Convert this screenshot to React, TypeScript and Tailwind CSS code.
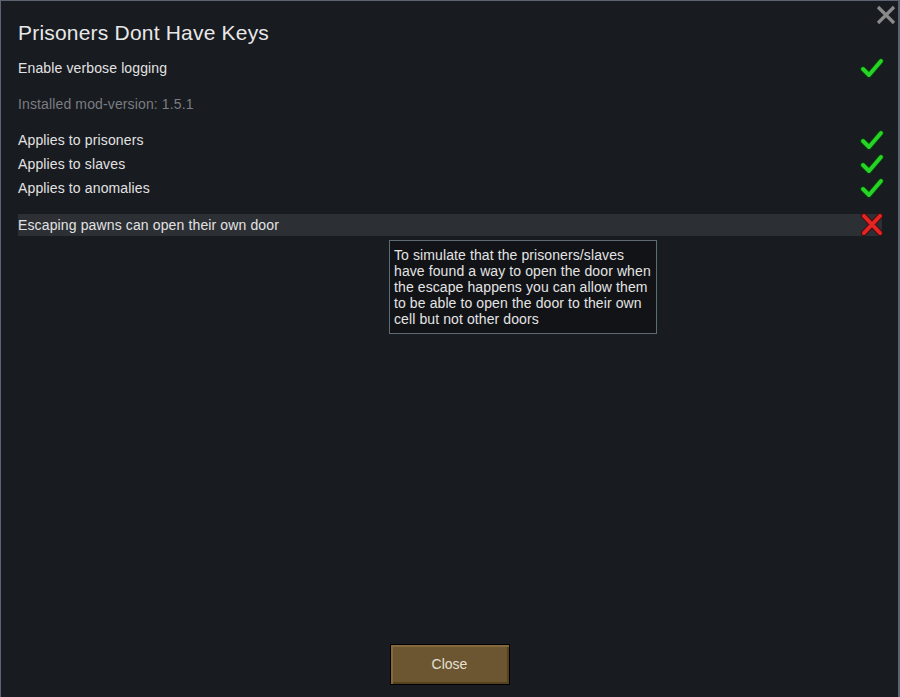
import React from 'react';

const Check = () => (
    <svg width="26" height="24" viewBox="0 0 26 24">
        <path d="M4 13 L10 19 L22 5" fill="none" stroke="#0c3a0c" strokeWidth="6" strokeLinecap="round" strokeLinejoin="round" />
        <path d="M4 13 L10 19 L22 5" fill="none" stroke="#25d425" strokeWidth="4" strokeLinecap="round" strokeLinejoin="round" />
    </svg>
);

const Cross = () => (
    <svg width="26" height="24" viewBox="0 0 26 24">
        <path d="M5 3 L21 20 M21 3 L5 20" fill="none" stroke="#4a0e0e" strokeWidth="6" strokeLinecap="round" />
        <path d="M5 3 L21 20 M21 3 L5 20" fill="none" stroke="#e52424" strokeWidth="4" strokeLinecap="round" />
    </svg>
);

const Row = ({ label, on, className = '' }: { label: string; on: boolean; className?: string }) => (
    <div className={`flex items-center justify-between h-[24px] mr-[-3px] ${className}`}>
        <span className="text-[14px] tracking-[0.13px] text-[#e2e2e2]">{label}</span>
        {on ? <Check /> : <Cross />}
    </div>
);

export default function App() {
    return (
        <div
            className="relative w-[900px] h-[697px] bg-[#181b20] border-l border-t border-r-2 border-[#5b6373] flex flex-col"
            style={{ fontFamily: '"Liberation Sans", Arial, sans-serif' }}
        >
            {/* close icon */}
            <button className="absolute right-[1px] top-[3px] w-[22px] h-[22px] flex items-center justify-center">
                <svg width="20" height="20" viewBox="0 0 20 20">
                    <path d="M2 2 L18 18 M18 2 L2 18" stroke="#8a8a8a" strokeWidth="3.2" />
                </svg>
            </button>

            <div className="pl-[17px] pr-[16px] pt-[20px] flex flex-col">
                <h1 className="text-[21px] leading-[24px] tracking-[0.2px] text-[#e8e8e8]">Prisoners Dont Have Keys</h1>

                <Row label="Enable verbose logging" on={true} className="mt-[11px]" />

                <div className="mt-[12px] h-[24px] flex items-center text-[14px] tracking-[0.13px] text-[#7b7d80]">
                    Installed mod-version: 1.5.1
                </div>

                <div className="mt-[12px] flex flex-col">
                    <Row label="Applies to prisoners" on={true} />
                    <Row label="Applies to slaves" on={true} />
                    <Row label="Applies to anomalies" on={true} />
                </div>

                <div className="mt-[14px] flex items-center justify-between h-[22px] bg-[#2c2f34]">
                    <span className="text-[14px] tracking-[0.13px] text-[#e2e2e2]">Escaping pawns can open their own door</span>
                    <span className="mr-[-3px]"><Cross /></span>
                </div>
            </div>

            {/* tooltip */}
            <div className="absolute left-[388px] top-[239px] w-[268px] h-[94px] bg-[#111317] border border-[#5f6b74] px-[4px] pt-[6px] text-[14px] leading-[16px] tracking-[0.1px] text-[#e4e4e4]">
                To simulate that the prisoners/slaves have found a way to open the door when the escape happens you can allow them to be able to open the door to their own cell but not other doors
            </div>

            <div className="mt-auto mb-[12px] flex justify-center">
                <button className="w-[120px] h-[41px] border border-black bg-[#6c5632] text-[14px] text-[#e6e0d4] shadow-[inset_2px_2px_0_#85693c,inset_-2px_-2px_0_#54421f]">
                    Close
                </button>
            </div>
        </div>
    );
}
